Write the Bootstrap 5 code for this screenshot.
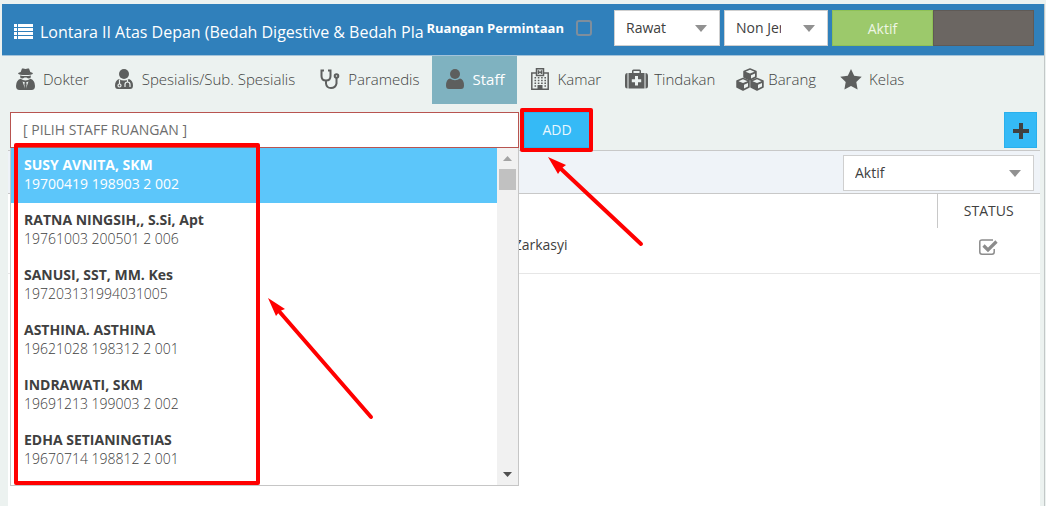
<!DOCTYPE html>
<html lang="id">
<head>
<meta charset="utf-8">
<meta name="viewport" content="width=device-width, initial-scale=1">
<title>Ruangan - Staff</title>
<link rel="stylesheet" href="https://cdn.jsdelivr.net/npm/bootstrap@5.3.0/dist/css/bootstrap.min.css">
<script src="https://cdn.jsdelivr.net/npm/bootstrap@5.3.0/dist/js/bootstrap.bundle.min.js"></script>
<style>
  body { font-family: "Open Sans", sans-serif; font-size: 14px; line-height: 20px; color: #404040; background: #ecf2f0; padding: 4px 1px 0 2px; }
  .room-window { min-height: calc(100vh - 4px); border-right: 1px solid #c3c8c8; }
  .titlebar { background: #3080bb; height: 52px; border-bottom: 1px solid #a3c3da; padding: 6px 10px 0 12px; color: #fff; }
  .titlebar h1 { font-size: 16px; line-height: 24px; font-weight: 400; min-width: 0; flex: 1 1 0; white-space: nowrap; margin: 10px 0 0 7px; }
  .titlebar .list-icon { margin-top: 14px; }
  .request-label { font-size: 13px; font-weight: 700; line-height: 36px; }
  .request-check.form-check-input { width: 16px; height: 16px; border: 2px solid #7f8e9c; border-radius: 3px; background-color: transparent; margin: 10px 22px 0 12px; }
  .combo.form-select { height: 36px; border: 1px solid #cfcfcf; border-radius: 0; color: #404040; font-size: 14px; line-height: 20px; padding: 7px 46px 7px 11px; text-overflow: clip;
    background-image: url("data:image/svg+xml,%3Csvg xmlns='http://www.w3.org/2000/svg' viewBox='0 0 12 7'%3E%3Cpath fill='%23919191' d='M0 0h12L6 7z'/%3E%3C/svg%3E"); background-size: 12px 7px; background-position: right 12px center; }
  .combo-room { width: 106px; }
  .combo-kind { width: 104px; }
  .combo-filter.form-select { width: 191px; }
  .status-toggle .btn { width: 101px; height: 36px; border-radius: 0; font-size: 14px; padding: 0; }
  .btn-on { background: #9cc96b; color: #eef6e4; border: 1px solid #8fc156; }
  .btn-off { background: #6b6662; border: 1px solid #5f5a56; }
  .room-tabs { height: 48px; }
  .room-tabs .nav-link { display: flex; align-items: center; height: 48px; padding: 0 12px 2px 10px; font-size: 15px; line-height: 20px; font-weight: 300; color: #3f4241; white-space: nowrap; border-radius: 0; }
  .room-tabs .nav-link.active { background: #7fb2c0; color: #fff; font-weight: 400; }
  .tab-icon { width: 26px; height: 24px; margin-right: 5px; display: flex; align-items: center; justify-content: center; color: #5d5f5e; flex: none; }
  .tab-icon svg { flex: none; }
  .picker-row { padding: 8px 7px 2px 8px; }
  .staff-picker { width: 509px; }
  .staff-picker .form-control { height: 36px; border: 1px solid #b85450; border-radius: 0; padding: 6px 12px 8px; font-size: 14px; line-height: 20px; color: #6e6e6e; }
  .staff-menu { left: 0; right: 0; top: 36px; z-index: 5; height: 338px; background: #fff; border: 1px solid #c6c6c6; border-top: 0; }
  .staff-menu ul { flex: 1; overflow: hidden; }
  .staff-menu .list-group-item { border: 0; border-radius: 0; padding: 7px 13px 8px; color: #404040; line-height: 19px; font-weight: 300; height: 55px; }
  .staff-menu .list-group-item strong { display: block; font-weight: 700; }
  .staff-menu .list-group-item.active { background: #5cc6fa; color: #fff; font-weight: 400; }
  .scroll-track { width: 21px; background: #f1f1f1; padding: 8px 2px 8px; }
  .scroll-thumb { height: 21px; width: 17px; background: #c1c1c1; margin-top: 8px; }
  .btn-blue { background: #35baf6; border: 1px solid #2ab0ec; color: #eaf7fe; border-radius: 0; height: 36px; font-size: 14px; padding: 0 0 2px; }
  .btn-add { width: 66px; margin-left: 5px; }
  .btn-plus { width: 33px; padding: 2px 0 0; }
  .note-list { left: 4px; top: 31px; width: 246px; height: 342px; z-index: 6; border: 4px solid #f00; border-radius: 2px; }
  .note-add { left: 510px; top: -4px; width: 73px; height: 44px; z-index: 6; border: 4px solid #f00; border-radius: 2px; }
  .note-arrow { z-index: 6; pointer-events: none; }
  .note-arrow-add { left: 534px; top: 43px; }
  .note-arrow-list { left: 256px; top: 184px; }
  .staff-panel { margin: 0 4px 0 6px; background: #fff; min-height: calc(100vh - 150px); border-top: 1px solid #c8c8c8; }
  .filter-bar { background: #eff3f8; height: 43px; border-bottom: 1px solid #c8c8c8; padding: 4px 6px; }
  .staff-table { table-layout: fixed; color: #404040; font-size: 14px; margin: 0; }
  .staff-table th { height: 34px; padding: 0; font-weight: 400; text-align: center; vertical-align: middle; border: 0; }
  .staff-table th.col-status { width: 103px; border-left: 1px solid #c8c8c8; }
  .staff-table .col-nip { width: 49%; }
  .staff-table td { height: 45px; padding: 0 0 10px; vertical-align: middle; border: 0; border-bottom: 1px solid #e6e6e6; }
</style>
</head>
<body>
<main class="room-window">
  <header class="titlebar d-flex align-items-start">
    <svg class="list-icon flex-shrink-0" width="19" height="15" viewBox="0 0 19 15" fill="#fff" aria-hidden="true"><path d="M0 0h3v3H0zM4 0h15v3H4zM0 4h3v3H0zM4 4h15v3H4zM0 8h3v3H0zM4 8h15v3H4zM0 12h3v3H0zM4 12h15v3H4z"/></svg>
    <h1>Lontara II Atas Depan (Bedah Digestive &amp; Bedah Pla</h1>
    <label class="request-label text-nowrap" for="permintaan">Ruangan Permintaan</label>
    <input class="form-check-input request-check flex-shrink-0" type="checkbox" id="permintaan">
    <select class="form-select combo combo-room flex-shrink-0" aria-label="Jenis ruangan"><option>Rawat</option></select>
    <select class="form-select combo combo-kind flex-shrink-0 ms-1" aria-label="Jenis"><option>Non Jenis</option></select>
    <div class="status-toggle d-flex flex-shrink-0 ms-1">
      <button class="btn btn-on" type="button">Aktif</button>
      <button class="btn btn-off" type="button" aria-label="Nonaktif"></button>
    </div>
  </header>

  <nav class="nav flex-nowrap room-tabs">
    <a class="nav-link" href="#"><span class="tab-icon"><svg width="19" height="22" viewBox="0 0 19 22"><path fill="currentColor" d="M6 0.600Q7.600 0 9.500 1 11.500 0 13 .6L14.300 4Q17 4.700 17 5.500 16 7 9.500 7T2 5.500Q2 4.700 4.700 4zM4 7.500Q9.500 8.700 15 7.500L14.500 10Q12.500 11 10.500 9.500H8.500Q6.500 11 4.500 10zM4.500 10.800Q9.500 14 14.500 10.800 19 12.500 19 18 19 22 15.500 22H3.500Q0 22 0 18 0 12.500 4.500 10.800z"/><path fill="#ecf2f0" d="M6.500 13.500L9 14.500 8.300 16 9 20.500zM12.500 13.500L10 14.500 10.700 16 10 20.500z"/></svg></span>Dokter</a>
    <a class="nav-link" href="#"><span class="tab-icon"><svg width="18" height="20" viewBox="0 0 18 20"><circle cx="9" cy="5" r="5" fill="currentColor"/><path fill="currentColor" d="M4 10Q9 13 14 10 18 11.500 18 16.500 18 20 15 20H3Q0 20 0 16.500 0 11.500 4 10z"/><g fill="none" stroke="#ecf2f0" stroke-width="1.200"><path d="M4.500 10.500V15M12.500 10.500V13M10 18V15.500Q10 13 12.500 13T15 15.500V18"/><circle cx="4.500" cy="16.500" r="1.500"/></g></svg></span>Spesialis/Sub. Spesialis</a>
    <a class="nav-link" href="#"><span class="tab-icon"><svg width="20" height="20" viewBox="0 0 20 20" fill="none" stroke="currentColor" stroke-width="2"><path d="M4 1.500H1.500V7Q1.500 11.500 6 11.500T10.500 7V1.500H8M6 12V14.500Q6.500 19 11 19T16.500 14.500V9"/><circle cx="16.500" cy="7" r="1.800"/></svg></span>Paramedis</a>
    <a class="nav-link active" href="#" aria-current="page"><span class="tab-icon"><svg width="18" height="20" viewBox="0 0 18 20" fill="currentColor"><circle cx="9" cy="5" r="5"/><path d="M4 9.500Q9 13 14 9.500 18 10.500 18 16.500 18 20 15 20H3Q0 20 0 16.500 0 10.500 4 9.500z"/></svg></span>Staff</a>
    <a class="nav-link" href="#"><span class="tab-icon"><svg width="18" height="22" viewBox="0 0 18 22"><path fill="none" stroke="currentColor" stroke-width="1.500" d="M5.500 5H.8V21.200H17.200V5H12.500M5.500 .8H12.500V7.500H5.500zM7.500 2.300V6M10.500 2.300V6M7.500 4.200H10.500"/><path fill="currentColor" d="M6.500 17h5v4.500h-5z"/><path fill="none" stroke="currentColor" stroke-width="1.600" stroke-dasharray="1.600 1.700" d="M3.500 9.700H15M3.500 12.500H15M3.500 15.300H15M3.500 18H5.500M13.400 18H15"/></svg></span>Kamar</a>
    <a class="nav-link" href="#"><span class="tab-icon"><svg width="23" height="20" viewBox="0 0 23 20"><path fill="currentColor" d="M2.500 4V19.500Q0 19.500 0 17V7Q0 4 2.500 4zM20.500 4V19.500Q23 19.500 23 17V7Q23 4 20.500 4zM3.500 4H7V2Q7 .5 8.500 .5H14.500Q16 .5 16 2V4H19.500V19.500H3.500zM8.500 4H14.500V2H8.500z"/><path fill="#ecf2f0" d="M10 7H13V10.200H16.200V13.200H13V16.500H10V13.200H6.800V10.200H10z"/></svg></span>Tindakan</a>
    <a class="nav-link" href="#"><span class="tab-icon"><svg width="28" height="23" viewBox="0 0 28 23"><g fill="currentColor" stroke="currentColor" stroke-width="1.500" stroke-linejoin="round"><path d="M14 1L20 3.500V9L14 12 8 9V3.500z"/><path d="M7 10.500L13 13V19L7 22 1 19V13zM21 10.500L27 13V19L21 22 15 19V13z"/></g><path fill="#ecf2f0" d="M14 1.800L18.500 3.700 14 5.600 9.500 3.700zM15 7.200L19 5.500V8.500L15 10.500zM7 11.300L11.500 13.200 7 15.100 2.500 13.200zM8 16.700L12 15V18.500L8 20.500zM21 11.300L25.500 13.200 21 15.100 16.500 13.200zM22 16.700L26 15V18.500L22 20.500z"/></svg></span>Barang</a>
    <a class="nav-link" href="#"><span class="tab-icon"><svg width="22" height="21" viewBox="0 0 22 21"><path fill="currentColor" d="M11 0L14.200 6.800 21.700 7.800 16.300 13 17.600 20.500 11 17 4.400 20.500 5.700 13 .3 7.800 7.800 6.800z"/></svg></span>Kelas</a>
  </nav>

  <section class="picker-row d-flex position-relative">
    <div class="staff-picker position-relative flex-shrink-0">
      <input class="form-control" type="text" value="[ PILIH STAFF RUANGAN ]" aria-label="Pilih staff ruangan">
      <div class="staff-menu position-absolute d-flex">
        <ul class="list-group list-group-flush mb-0">
          <li class="list-group-item active"><strong>SUSY AVNITA, SKM</strong>19700419 198903 2 002</li>
          <li class="list-group-item"><strong>RATNA NINGSIH,, S.Si, Apt</strong>19761003 200501 2 006</li>
          <li class="list-group-item"><strong>SANUSI, SST, MM. Kes</strong>197203131994031005</li>
          <li class="list-group-item"><strong>ASTHINA. ASTHINA</strong>19621028 198312 2 001</li>
          <li class="list-group-item"><strong>INDRAWATI, SKM</strong>19691213 199003 2 002</li>
          <li class="list-group-item"><strong>EDHA SETIANINGTIAS</strong>19670714 198812 2 001</li>
        </ul>
        <div class="scroll-track d-flex flex-column align-items-center" aria-hidden="true">
          <svg width="9" height="5" viewBox="0 0 9 5"><path fill="#a3a3a3" d="M0 5h9L4.500 0z"/></svg>
          <div class="scroll-thumb"></div>
          <svg class="mt-auto" width="9" height="5" viewBox="0 0 9 5"><path fill="#505050" d="M0 0h9L4.500 5z"/></svg>
        </div>
      </div>
      <div class="note-list position-absolute"></div>
      <div class="note-add position-absolute"></div>
      <svg class="note-arrow note-arrow-add position-absolute" width="100" height="92" viewBox="0 0 100 92"><path stroke="#f00" stroke-width="4" stroke-linecap="round" d="M15 12L97 89"/><path fill="#f00" d="M4 2L22 10 18 13 14 19z"/></svg>
      <svg class="note-arrow note-arrow-list position-absolute" width="108" height="124" viewBox="0 0 108 124"><path stroke="#f00" stroke-width="4" stroke-linecap="round" d="M12 14L105 121"/><path fill="#f00" d="M2 2L19 13 14 15 10 20z"/></svg>
    </div>
    <button class="btn btn-blue btn-add" type="button">ADD</button>
    <button class="btn btn-blue btn-plus ms-auto d-flex align-items-center justify-content-center" type="button" aria-label="Tambah"><svg width="16" height="16" viewBox="0 0 16 16"><path fill="#404040" d="M6 0h4v6h6v4h-6v6H6v-6H0V6h6z"/></svg></button>
  </section>

  <section class="staff-panel">
    <div class="filter-bar d-flex justify-content-end">
      <select class="form-select combo combo-filter" aria-label="Filter status"><option>Aktif</option></select>
    </div>
    <table class="table staff-table">
      <thead><tr><th class="col-nip"></th><th></th><th class="col-status">STATUS</th></tr></thead>
      <tbody><tr><td></td><td>Zarkasyi</td><td class="text-center"><svg width="19" height="16" viewBox="0 0 19 16" fill="none" role="img" aria-label="Aktif"><path stroke="#8c8c8c" stroke-width="1.500" d="M14 1H3Q.8 1 .8 3V13Q.8 15.200 3 15.200H13Q15.200 15.200 15.200 13V10"/><path stroke="#8c8c8c" stroke-width="3.200" d="M4.500 6.500L9 11 17.500 2.500"/></svg></td></tr></tbody>
    </table>
  </section>
</main>
</body>
</html>
